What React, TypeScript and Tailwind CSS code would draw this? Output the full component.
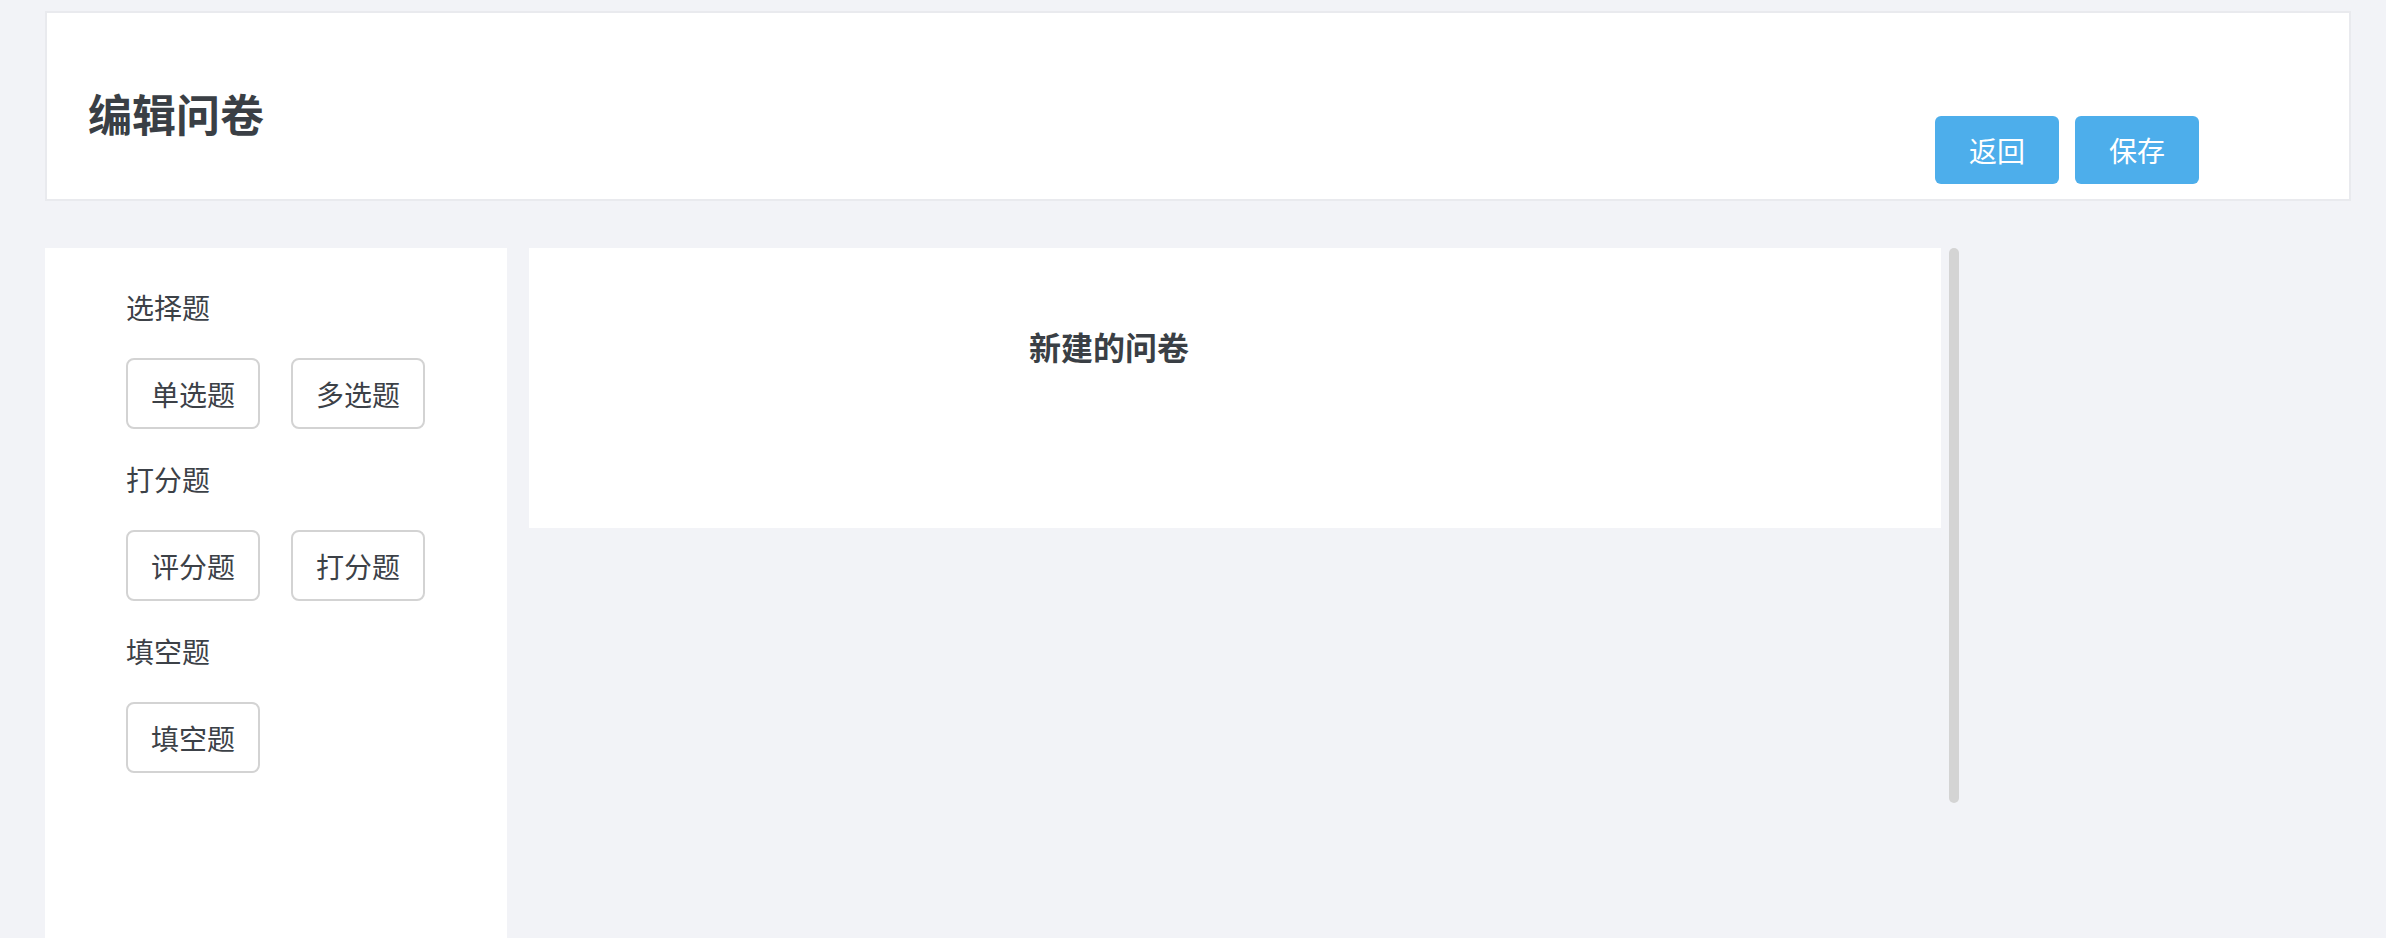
import React from "react";

const font = { fontFamily: '"Noto Sans CJK SC", "Noto Sans", sans-serif' };

function TypeButton({ label }: { label: string }) {
  return (
    <button className="w-[134px] h-[71px] rounded-[8px] border-2 border-[#d3d3d3] bg-white text-[28px] leading-none text-[#3c4147]">
      {label}
    </button>
  );
}

function Section({ title, items }: { title: string; items: string[] }) {
  return (
    <>
      <div className="h-[39px] leading-[39px] text-[28px] text-[#3c4147]">{title}</div>
      <div className="flex gap-[31px]">
        {items.map((it) => (
          <TypeButton key={it} label={it} />
        ))}
      </div>
    </>
  );
}

export default function App() {
  return (
    <div className="w-[2386px] h-[938px] overflow-hidden bg-[#f2f3f7] pt-[11px] pl-[45px]" style={font}>
      <header className="w-[2306px] h-[190px] bg-white border-2 border-[#e9eaee] flex items-start">
        <h1 className="ml-[41px] mt-[70px] text-[44px] leading-[60px] font-bold text-[#3a3f45]">编辑问卷</h1>
        <div className="ml-auto mr-[150px] mt-[103px] flex gap-[16px]">
          <button className="w-[124px] h-[68px] rounded-[6px] bg-[#4daeeb] text-white text-[28px] leading-none">返回</button>
          <button className="w-[124px] h-[68px] rounded-[6px] bg-[#4daeeb] text-white text-[28px] leading-none">保存</button>
        </div>
      </header>
      <div className="mt-[47px] flex items-start">
        <aside className="w-[462px] h-[690px] bg-white pt-[40px] pl-[81px] flex flex-col gap-[31px]">
          <Section title="选择题" items={["单选题", "多选题"]} />
          <Section title="打分题" items={["评分题", "打分题"]} />
          <Section title="填空题" items={["填空题"]} />
        </aside>
        <main className="ml-[22px] flex items-start">
          <div className="w-[1412px] h-[280px] bg-white pt-[76px] pl-[500px]">
            <h2 className="text-[32px] leading-[44px] font-bold text-[#3a3f45]">新建的问卷</h2>
          </div>
          <div className="ml-[8px] w-[10px] h-[555px] rounded-full bg-[#d4d4d4]" />
        </main>
      </div>
    </div>
  );
}
